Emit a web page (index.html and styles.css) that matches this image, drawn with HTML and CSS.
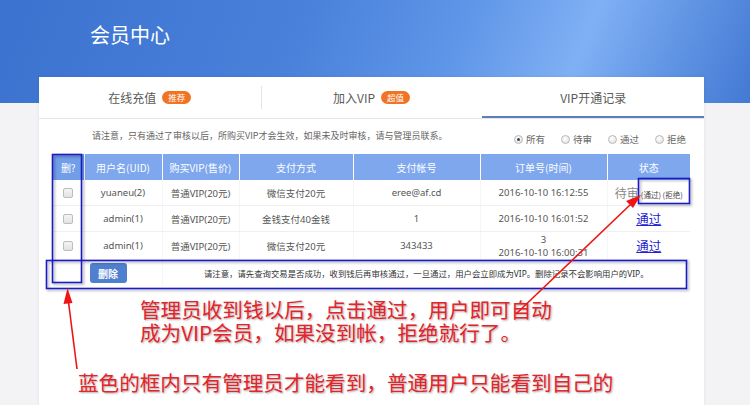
FILE: index.html
```html
<!DOCTYPE html>
<html lang="zh-CN">
<head>
<meta charset="utf-8">
<title>会员中心</title>
<link rel="stylesheet" href="styles.css">
</head>
<body>
<div class="hero">
  <h1 class="hero-title">会员中心</h1>
</div>
<div class="card">
  <div class="tabs">
    <div class="tab"><span>在线充值</span><span class="badge">推荐</span></div>
    <div class="tab tab-sep"><span>加入VIP</span><span class="badge">超值</span></div>
    <div class="tab tab-active"><span>VIP开通记录</span></div>
  </div>
  <div class="notice-row">
    <p class="notice">请注意，只有通过了审核以后，所购买VIP才会生效，如果未及时审核，请与管理员联系。</p>
    <div class="filters">
      <label class="radio"><span class="dot dot-on"></span>所有</label>
      <label class="radio"><span class="dot"></span>待审</label>
      <label class="radio"><span class="dot"></span>通过</label>
      <label class="radio"><span class="dot"></span>拒绝</label>
    </div>
  </div>
  <table class="grid">
    <colgroup>
      <col class="c1"><col class="c2"><col class="c3"><col class="c4"><col class="c5"><col class="c6"><col class="c7">
    </colgroup>
    <thead>
      <tr>
        <th class="th-del">删?</th>
        <th>用户名(UID)</th>
        <th>购买VIP(售价)</th>
        <th>支付方式</th>
        <th>支付帐号</th>
        <th>订单号(时间)</th>
        <th>状态</th>
      </tr>
    </thead>
    <tbody>
      <tr class="r1">
        <td><span class="check"></span></td>
        <td>yuaneu(2)</td>
        <td>普通VIP(20元)</td>
        <td>微信支付20元</td>
        <td>eree@af.cd</td>
        <td>2016-10-10 16:12:55</td>
        <td class="status"><span class="pending">待审</span><span class="acts">(通过) (拒绝)</span></td>
      </tr>
      <tr class="r2">
        <td><span class="check"></span></td>
        <td>admin(1)</td>
        <td>普通VIP(20元)</td>
        <td>金钱支付40金钱</td>
        <td>1</td>
        <td>2016-10-10 16:01:52</td>
        <td class="status"><a class="pass">通过</a></td>
      </tr>
      <tr class="r3">
        <td><span class="check"></span></td>
        <td>admin(1)</td>
        <td>普通VIP(20元)</td>
        <td>微信支付20元</td>
        <td>343433</td>
        <td class="two-line">3<br>2016-10-10 16:00:31</td>
        <td class="status"><a class="pass">通过</a></td>
      </tr>
      <tr class="foot">
        <td></td>
        <td><button class="btn-del">删除</button></td>
        <td colspan="5" class="foot-text">请注意，请先查询交易是否成功，收到钱后再审核通过，一旦通过，用户会立即成为VIP。删除记录不会影响用户的VIP。</td>
      </tr>
    </tbody>
  </table>
  <div class="notes">
    <p class="note note-main">管理员收到钱以后，点击通过，用户即可自动</p>
    <p class="note note-main">成为VIP会员，如果没到帐，拒绝就行了。</p>
    <p class="note note-side">蓝色的框内只有管理员才能看到，普通用户只能看到自己的</p>
  </div>
</div>
<svg class="overlay" width="750" height="405" viewBox="0 0 750 405" aria-hidden="true">
  <defs>
    <filter id="sh" x="-10%" y="-10%" width="130%" height="130%">
      <feDropShadow dx="1.5" dy="1.5" stdDeviation="1" flood-color="#000" flood-opacity="0.35"/>
    </filter>
  </defs>
  <g fill="none" stroke="#1a1ac4" stroke-width="1.6" filter="url(#sh)">
    <rect x="52.5" y="154.5" width="29" height="128"/>
    <rect x="46.5" y="260.5" width="640" height="28"/>
    <rect x="638.5" y="178.5" width="51" height="25"/>
  </g>
  <g stroke="#ee1515" stroke-width="1.6" fill="#ee1515">
    <line x1="77" y1="369" x2="68.5" y2="302"/>
    <polygon points="67.5,288 63.5,304 72.5,303" stroke="none"/>
    <line x1="516" y1="314" x2="631" y2="204"/>
    <polygon points="641,195 626,201 633,208" stroke="none"/>
  </g>
</svg>
</body>
</html>
```
FILE: styles.css
```css
html, body {
  margin: 0;
  padding: 0;
}
body {
  width: 750px;
  height: 405px;
  overflow: hidden;
  position: relative;
  background: #f3f3f6;
  font-family: "Noto Sans", "Noto Sans CJK SC", sans-serif;
  color: #555;
}
.hero {
  height: 103px;
  background: linear-gradient(112deg, #3c72cf 0%, #4880da 38%, #5f96e8 60%, #80b0f4 76%, #5b90e1 90%, #4479d4 100%);
  padding: 22px 0 0 90px;
  box-sizing: border-box;
}
.hero-title {
  margin: 0;
  font-family: "Noto Sans CJK SC", sans-serif;
  font-weight: 400;
  font-size: 20px;
  line-height: 26px;
  color: #fff;
}
.card {
  margin: -26px 0 0 39px;
  width: 665px;
  height: 340px;
  background: #fff;
  box-shadow: 0 0 3px rgba(0,0,0,0.08);
}
.tabs {
  display: flex;
  height: 41px;
  border-bottom: 1px solid #e6e6e6;
}
.tab {
  flex: 1;
  display: flex;
  align-items: center;
  justify-content: center;
  gap: 6px;
  font-family: "Noto Sans CJK SC", sans-serif;
  font-size: 12px;
  color: #5a5a5a;
  position: relative;
}
.tab-sep::before {
  content: "";
  position: absolute;
  left: 0;
  top: 9px;
  bottom: 9px;
  width: 1px;
  background: #e4e4e4;
}
.tab-active {
  box-shadow: inset 0 -2px 0 #5b7eb9;
}
.badge {
  display: inline-block;
  background: #f07424;
  color: #fff;
  font-size: 8.5px;
  line-height: 13px;
  padding: 0 6px;
  border-radius: 7px;
}
.notice-row {
  height: 35px;
  display: flex;
  align-items: center;
  justify-content: space-between;
  padding: 0 18px 0 53px;
}
.notice {
  margin: 0;
  font-family: "Noto Sans CJK SC", sans-serif;
  font-size: 9px;
  color: #666;
  margin-top: -2px;
}
.filters {
  display: flex;
  gap: 16px;
  margin-top: 5px;
}
.radio {
  display: flex;
  align-items: center;
  gap: 3px;
  font-family: "Noto Sans CJK SC", sans-serif;
  font-size: 9.5px;
  color: #666;
}
.dot {
  width: 7px;
  height: 7px;
  border-radius: 50%;
  border: 1px solid #b9b9b9;
  background: radial-gradient(circle at 40% 35%, #fff, #ddd);
  position: relative;
}
.dot-on::after {
  content: "";
  position: absolute;
  left: 2px;
  top: 2px;
  width: 3px;
  height: 3px;
  border-radius: 50%;
  background: #444;
}
.grid {
  margin-left: 14px;
  width: 637px;
  border-collapse: collapse;
  table-layout: fixed;
}
.c1 { width: 31px; }
.c2 { width: 78px; }
.c3 { width: 77px; }
.c4 { width: 114px; }
.c5 { width: 127px; }
.c6 { width: 127px; }
.c7 { width: 83px; }
.grid th {
  height: 26px;
  padding: 0;
  background: #7ea7ee;
  color: #fff;
  font-family: "Noto Sans CJK SC", sans-serif;
  font-weight: 400;
  font-size: 10px;
  border-left: 1px solid #fff;
  text-align: center;
}
.grid th.th-del {
  background: #719de9;
  border-left: none;
}
.grid td {
  padding: 0;
  text-align: center;
  font-size: 9.5px;
  color: #555;
  border-bottom: 1px solid #efefef;
  border-left: 1px solid #f6f6f6;
  font-family: "Noto Sans", "Noto Sans CJK SC", sans-serif;
}
.grid td:first-child { border-left: none; }
.r1 td { height: 25px; }
.r2 td { height: 25px; }
.r3 td { height: 27px; }
.foot td { height: 26px; border-bottom: none; }
.two-line { line-height: 13px; }
.check {
  display: inline-block;
  width: 8px;
  height: 8px;
  border: 1px solid #bdbdbd;
  border-radius: 2px;
  background: linear-gradient(#f4f4f4, #e2e2e2);
  vertical-align: middle;
}
.status {
  white-space: nowrap;
}
.pending {
  font-family: "Noto Sans CJK SC", sans-serif;
  font-size: 12px;
  color: #888;
  margin-right: 2px;
}
.acts {
  font-family: "Noto Sans CJK SC", sans-serif;
  font-size: 7.5px;
  color: #444;
}
.pass {
  font-family: "Noto Sans CJK SC", sans-serif;
  font-size: 12.5px;
  color: #2323d2;
  text-decoration: underline;
  cursor: pointer;
}
.btn-del {
  display: block;
  margin-left: 5px;
  width: 37px;
  height: 20px;
  border: none;
  border-radius: 3px;
  background: #4f7fcf;
  color: #fff;
  font-family: "Noto Sans CJK SC", sans-serif;
  font-weight: 700;
  font-size: 10px;
  padding: 0;
}
.foot-text {
  font-family: "Noto Sans CJK SC", sans-serif;
  font-size: 8.4px !important;
  color: #333 !important;
}
.notes {
  padding-top: 12px;
}
.note {
  margin: 0;
  height: 23px;
  font-family: "Noto Sans CJK SC", sans-serif;
  font-size: 20.6px;
  line-height: 23px;
  color: #e5232b;
  text-shadow: 1px 1px 2px rgba(0,0,0,0.35);
  white-space: nowrap;
}
.note-main {
  padding-left: 101px;
}
.note-side {
  margin-top: 27px;
  padding-left: 39px;
}
.overlay {
  position: absolute;
  left: 0;
  top: 0;
  pointer-events: none;
}
```
